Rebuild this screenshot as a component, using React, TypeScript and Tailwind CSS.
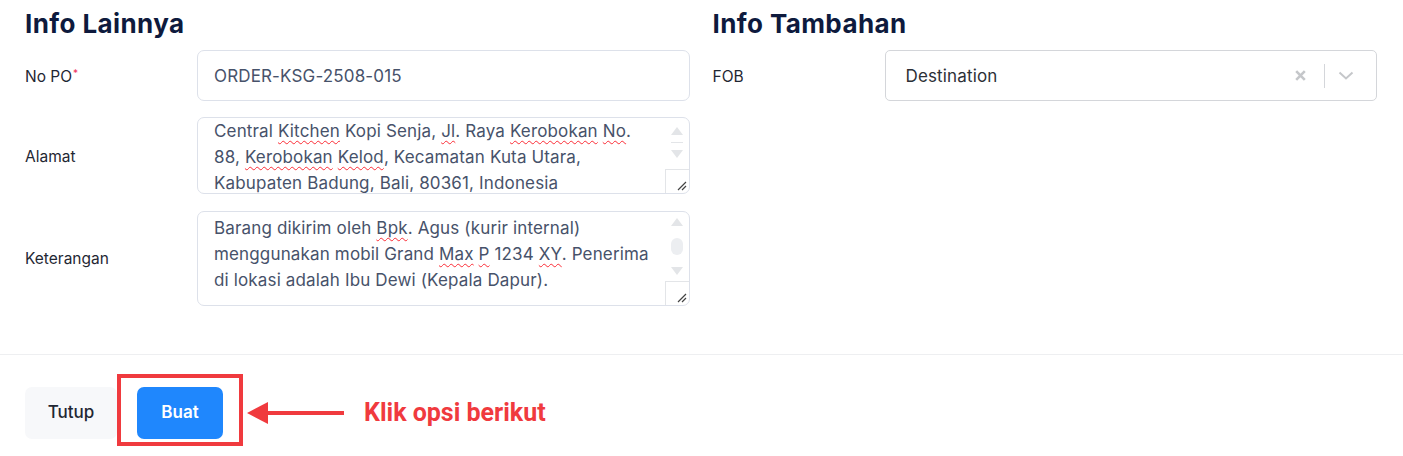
const font = { fontFamily: 'Inter, "Noto Sans", sans-serif' }

function Wavy({ children }: { children: string }) {
  return (
    <span className="underline decoration-wavy decoration-red-500 decoration-1 underline-offset-[3px]">
      {children}
    </span>
  )
}

function Arrow({ dir }: { dir: 'up' | 'down' }) {
  return (
    <svg width="12" height="8" viewBox="0 0 12 8">
      {dir === 'up' ? <path d="M6 0 L12 8 H0 Z" fill="#e3e5e8" /> : <path d="M0 0 H12 L6 8 Z" fill="#e3e5e8" />}
    </svg>
  )
}

function FakeScrollbar({ thumb }: { thumb: boolean }) {
  return (
    <div className="flex w-[24px] shrink-0 flex-col items-center">
      <div className={`flex flex-1 flex-col items-center ${thumb ? 'justify-between pb-[6px] pt-[6px]' : 'pt-[9px]'}`}>
        <Arrow dir="up" />
        {thumb ? (
          <div className="h-[17px] w-[12px] rounded-full bg-[#eceef1]" />
        ) : (
          <div className="my-[7px] h-px w-[12px] bg-[#e3e5e8]" />
        )}
        <Arrow dir="down" />
      </div>
      <div className="flex h-[24px] w-[24px] items-end justify-end border-l border-t border-[#e3e5e8] pb-[2px] pr-[2px]">
        <svg width="10" height="10" viewBox="0 0 10 10">
          <path d="M1 9 L9 1 M5 9 L9 5" stroke="#444" strokeWidth="1.2" />
        </svg>
      </div>
    </div>
  )
}

function Row({ label, required, children }: { label: string; required?: boolean; children: React.ReactNode }) {
  return (
    <div className="flex items-center">
      <div className="w-[172px] shrink-0 pt-[2px] text-[15.5px] text-[#1f2733]">
        {label}
        {required && <sup className="ml-[1px] text-[10px] text-[#ef2f5a]">*</sup>}
      </div>
      <div className="flex-1">{children}</div>
    </div>
  )
}

export default function App() {
  return (
    <div className="h-[456px] w-[1403px] bg-white" style={font}>
      <div className="grid grid-cols-2 gap-[23px] pl-[25px] pr-[26px] pt-[8px] pb-[48px]">
        <div>
          <h2 className="text-[26px] font-bold leading-[32px] tracking-[0.4px] text-[#0e1a3d]">Info Lainnya</h2>
          <div className="mt-[10px] flex flex-col gap-[16px]">
            <Row label="No PO" required>
              <div className="flex h-[51px] items-center rounded-[7px] border border-[#dde1ea] px-[16px] pt-[2px] text-[17px] tracking-[0.15px] text-[#47526a]">
                ORDER-KSG-2508-015
              </div>
            </Row>
            <Row label="Alamat">
              <div className="flex h-[77px] overflow-hidden rounded-[7px] border border-[#dde1ea]">
                <div className="flex-1 pl-[16px] pr-[12px] text-[17px] leading-[26px] tracking-[0.15px] text-[#47526a]">
                  Central <Wavy>Kitchen</Wavy> Kopi Senja, <Wavy>Jl</Wavy>. Raya <Wavy>Kerobokan</Wavy> <Wavy>No</Wavy>.
                  88, <Wavy>Kerobokan</Wavy> <Wavy>Kelod</Wavy>, Kecamatan Kuta Utara, Kabupaten Badung, Bali, 80361,
                  Indonesia
                </div>
                <FakeScrollbar thumb={false} />
              </div>
            </Row>
            <Row label="Keterangan">
              <div className="mt-[1px] flex h-[95px] overflow-hidden rounded-[7px] border border-[#dde1ea]">
                <div className="flex-1 pl-[16px] pr-[12px] pt-[3px] text-[17px] leading-[26px] tracking-[0.15px] text-[#47526a]">
                  Barang dikirim oleh <Wavy>Bpk</Wavy>. Agus (kurir internal) menggunakan mobil Grand <Wavy>Max</Wavy>{' '}
                  <Wavy>P</Wavy> 1234 <Wavy>XY</Wavy>. Penerima di lokasi adalah Ibu Dewi (Kepala Dapur).
                </div>
                <FakeScrollbar thumb />
              </div>
            </Row>
          </div>
        </div>
        <div>
          <h2 className="text-[26px] font-bold leading-[32px] tracking-[0.4px] text-[#0e1a3d]">Info Tambahan</h2>
          <div className="mt-[10px]">
            <Row label="FOB">
              <div className="flex h-[51px] items-center rounded-[5px] border border-[#d4d6da] pl-[20px] pr-[22px]">
                <span className="flex-1 pt-[2px] text-[17px] tracking-[0.15px] text-[#2c2f36]">Destination</span>
                <svg width="11" height="11" viewBox="0 0 11 11">
                  <path d="M1.2 1.2 L9.8 9.8 M9.8 1.2 L1.2 9.8" stroke="#c5c7ca" strokeWidth="2.6" />
                </svg>
                <div className="ml-[18px] mr-[13px] h-[24px] w-px bg-[#d4d6da]" />
                <svg width="16" height="9" viewBox="0 0 16 9">
                  <path d="M1.5 1.5 L8 7.5 L14.5 1.5" fill="none" stroke="#c5c7ca" strokeWidth="2" />
                </svg>
              </div>
            </Row>
          </div>
        </div>
      </div>
      <div className="border-t border-[#eeeff1] px-[25px] pt-[32px]">
        <div className="flex items-center">
          <button className="h-[52px] w-[92px] rounded-[7px] bg-[#f7f8fa] text-[17px] font-medium text-[#1f2733]">
            Tutup
          </button>
          <div className="relative ml-[20px]">
            <button className="h-[52px] w-[86px] rounded-[7px] bg-[#1f87fd] text-[17px] font-semibold text-white">
              Buat
            </button>
            <div className="absolute -left-[20px] -right-[20px] -top-[13px] -bottom-[7px] border-[4px] border-[#f03a3e]" />
          </div>
          <svg width="98" height="24" viewBox="0 0 98 24" className="ml-[24px]">
            <path d="M18 12 H97" stroke="#f03a3e" strokeWidth="4" />
            <path d="M0 12 L21 1 L21 23 Z" fill="#f03a3e" />
          </svg>
          <span className="ml-[19px] text-[25px] font-bold text-[#f03a3e]" style={{ fontFamily: 'Roboto, sans-serif' }}>
            Klik opsi berikut
          </span>
        </div>
      </div>
    </div>
  )
}
